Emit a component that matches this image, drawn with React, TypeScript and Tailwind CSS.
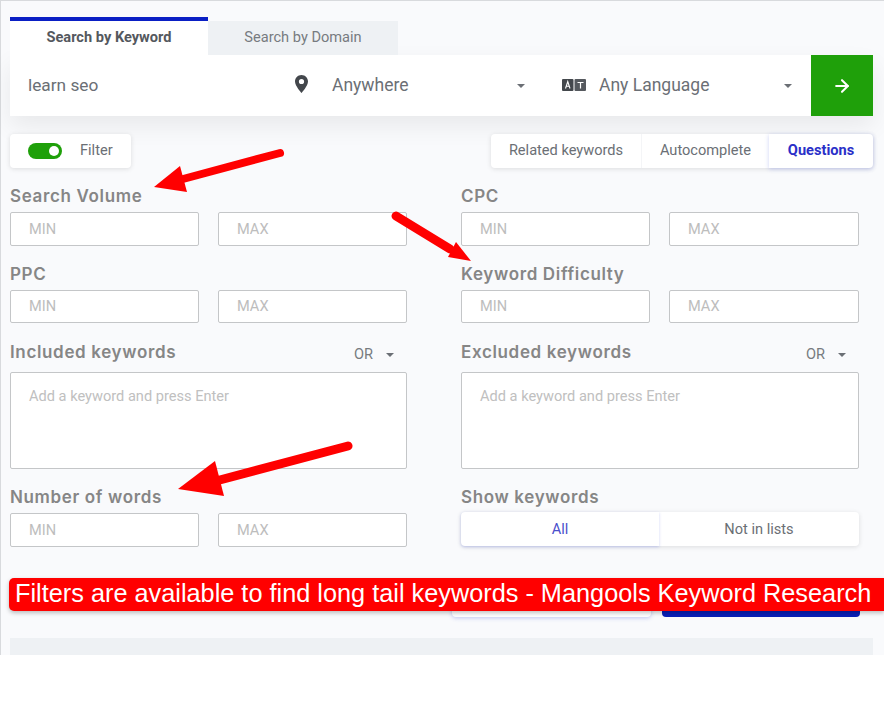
import { ArrowRight } from "lucide-react";

const roboto = "font-['Roboto',sans-serif]";
const heading = "font-['Inter',sans-serif] font-semibold text-[17px] tracking-[0.65px] leading-[20px] text-[#868686]";

function Caret() {
  return <span className="w-0 h-0 border-x-[4px] border-x-transparent border-t-[4px] border-t-[#6b6f75]" />;
}

function MinMax({ short = false }: { short?: boolean }) {
  return (
    <div className="grid grid-cols-[189px_1fr] gap-x-[19px]">
      {["MIN", "MAX"].map((p) => (
        <div
          key={p}
          className={
            (short ? "h-[33px]" : "h-[34px]") +
            " bg-white border border-[#c4c6c8] rounded-[2px] pl-[18px] pt-[1px] flex items-center text-[14.6px] text-[#bdbdbd]"
          }
        >
          {p}
        </div>
      ))}
    </div>
  );
}

function Field({ label, top = "mt-0", short = false }: { label: string; top?: string; short?: boolean }) {
  return (
    <div className={top}>
      <div className={heading + " h-[20px] mb-[6px]"}>{label}</div>
      <MinMax short={short} />
    </div>
  );
}

function KeywordBox({ label }: { label: string }) {
  return (
    <div>
      <div className="flex items-center justify-between h-[20px] mb-[10px]">
        <span className={heading}>{label}</span>
        <span className="flex items-center gap-[13px] pr-[13px] pt-[5px] text-[14.6px] text-[#777b80]">
          OR <Caret />
        </span>
      </div>
      <div className="h-[97px] bg-white border border-[#c4c6c8] rounded-[2px] pl-[18px] pt-[13px] text-[14.6px] leading-[20px] text-[#c0c0c0]">
        Add a keyword and press Enter
      </div>
    </div>
  );
}

export default function App() {
  return (
    <div className={"relative w-[884px] h-[703px] bg-white overflow-hidden " + roboto}>
      <div className="h-[655px] bg-[#f9fafc] border-l border-t border-[#d8dadd] pl-[9px] pt-[16px]">
        {/* tabs */}
        <div className="flex items-end">
          <div className="w-[198px] h-[38px] bg-white border-t-[4px] border-[#0a1fc4] flex items-center justify-center text-[14.6px] font-bold text-[#54585e]">
            Search by Keyword
          </div>
          <div className="w-[190px] h-[34px] bg-[#eef1f4] flex items-center justify-center text-[14.6px] text-[#777b80]">
            Search by Domain
          </div>
        </div>

        {/* search bar */}
        <div className="w-[863px] h-[61px] flex shadow-[0_10px_24px_rgba(0,0,0,0.07)]">
          <div className="w-[267px] bg-white pl-[18px] flex items-center text-[17.3px] text-[#6b6f75]">learn seo</div>
          <div className="w-[267px] bg-white pl-[18px] pr-[19px] flex items-center text-[17.5px] text-[#6b6f75]">
            <svg width="13" height="18" viewBox="0 0 13 18" className="shrink-0 -mt-[3px]">
              <path
                fillRule="evenodd"
                d="M6.500 0C2.900 0 0 2.900 0 6.500 0 11 6.500 18 6.500 18S13 11 13 6.500C13 2.900 10.100 0 6.500 0Zm0 9.100a2.600 2.600 0 1 1 0-5.200 2.600 2.600 0 0 1 0 5.200Z"
                fill="#43474c"
              />
            </svg>
            <span className="ml-[24px] flex-1">Anywhere</span>
            <Caret />
          </div>
          <div className="w-[267px] bg-white pl-[18px] pr-[19px] flex items-center text-[17.5px] text-[#6b6f75]">
            <svg width="24" height="12" viewBox="0 0 24 12" className="shrink-0 -mt-[2px]">
              <rect x="0" y="0" width="11.500" height="12" rx="1" fill="#43474c" />
              <rect x="12.500" y="0" width="11.500" height="12" rx="1" fill="#55595e" />
              <path d="M3.500 9.500 5.750 2.500 8 9.500M4.300 7.200h2.900" stroke="#fff" strokeWidth="1.100" fill="none" />
              <path d="M15.500 3.500h6M18.500 3.500v6" stroke="#fff" strokeWidth="1.200" fill="none" />
            </svg>
            <span className="ml-[13px] flex-1">Any Language</span>
            <Caret />
          </div>
          <div className="w-[62px] bg-[#1fa00a] flex items-center justify-center">
            <ArrowRight size={20} strokeWidth={2.5} className="text-white" />
          </div>
        </div>

        {/* filter row */}
        <div className="w-[863px] mt-[18px] flex justify-between text-[14.6px] text-[#6b6f75]">
          <div className="w-[121px] h-[34px] bg-white rounded-[4px] shadow-[0_1px_5px_rgba(0,0,0,0.12)] flex items-center pl-[18px]">
            <span className="w-[34px] h-[16px] rounded-full bg-[#1fa00a] flex items-center justify-end pr-[3px]">
              <span className="w-[10px] h-[10px] rounded-full bg-white" />
            </span>
            <span className="ml-[18px]">Filter</span>
          </div>
          <div className="h-[34px] bg-white rounded-[4px] shadow-[0_1px_5px_rgba(0,0,0,0.12)] flex">
            <span className="w-[150px] flex items-center justify-center">Related keywords</span>
            <span className="w-[128px] flex items-center justify-center border-l border-[#f4f5f7]">Autocomplete</span>
            <span className="w-[104px] flex items-center justify-center font-bold text-[#2a2fc8] rounded-r-[4px] shadow-[0_1px_4px_rgba(60,80,220,0.25)]">
              Questions
            </span>
          </div>
        </div>

        {/* filters */}
        <div className="mt-[18px] grid grid-cols-[397px_398px] gap-x-[54px]">
          <Field label="Search Volume" />
          <Field label="CPC" />
          <Field label="PPC" top="mt-[18px]" short />
          <Field label="Keyword Difficulty" top="mt-[18px]" short />
          <div className="mt-[19px]">
            <KeywordBox label="Included keywords" />
          </div>
          <div className="mt-[19px]">
            <KeywordBox label="Excluded keywords" />
          </div>
          <Field label="Number of words" top="mt-[18px]" />
          <div className="mt-[18px]">
            <div className={heading + " h-[20px] mb-[5px]"}>Show keywords</div>
            <div className="h-[34px] flex bg-white rounded-[4px] shadow-[0_1px_5px_rgba(0,0,0,0.12)] text-[14.6px]">
              <span className="w-[198px] pt-[1px] flex items-center justify-center text-[#4a50cc] rounded-l-[4px] shadow-[0_1px_3px_rgba(60,80,220,0.25)]">
                All
              </span>
              <span className="flex-1 pt-[1px] flex items-center justify-center text-[#6b6f75]">Not in lists</span>
            </div>
          </div>
        </div>

        {/* buttons behind the banner */}
        <div className="w-[850px] mt-[36px] flex justify-end gap-[11px]">
          <div className="w-[199px] h-[34px] bg-white rounded-[4px] shadow-[0_1px_4px_rgba(60,80,220,0.3)]" />
          <div className="w-[198px] h-[34px] bg-[#0a1fb8] rounded-[4px]" />
        </div>

        <div className="w-[863px] h-[17px] mt-[21px] bg-[#eef1f4]" />
      </div>

      {/* arrows drawn on top of the screenshot */}
      <svg width="884" height="703" viewBox="0 0 884 703" className="absolute inset-0 pointer-events-none">
        <path d="M280 153 183 179" stroke="#f00" strokeWidth="8" strokeLinecap="round" />
        <path d="M154 187 180 166 187 192Z" fill="#f00" />
        <path d="M396 216 450 249" stroke="#f00" strokeWidth="9" strokeLinecap="round" />
        <path d="M471 261 448 257 456 242Z" fill="#f00" />
        <path d="M348 446 216 481" stroke="#f00" strokeWidth="9" strokeLinecap="round" />
        <path d="M178 489 215 461 224 496Z" fill="#f00" />
      </svg>

      {/* caption banner */}
      <div className="absolute left-[9px] top-[578px] w-[875px] h-[33px] bg-[#ff0000] rounded-l-[5px] shadow-[0_2px_4px_rgba(0,0,0,0.25)] pl-[6px] pb-[2px] flex items-center font-['Liberation_Sans',sans-serif] text-[25.3px] text-white whitespace-nowrap">
        Filters are available to find long tail keywords - Mangools Keyword Research
      </div>
    </div>
  );
}
